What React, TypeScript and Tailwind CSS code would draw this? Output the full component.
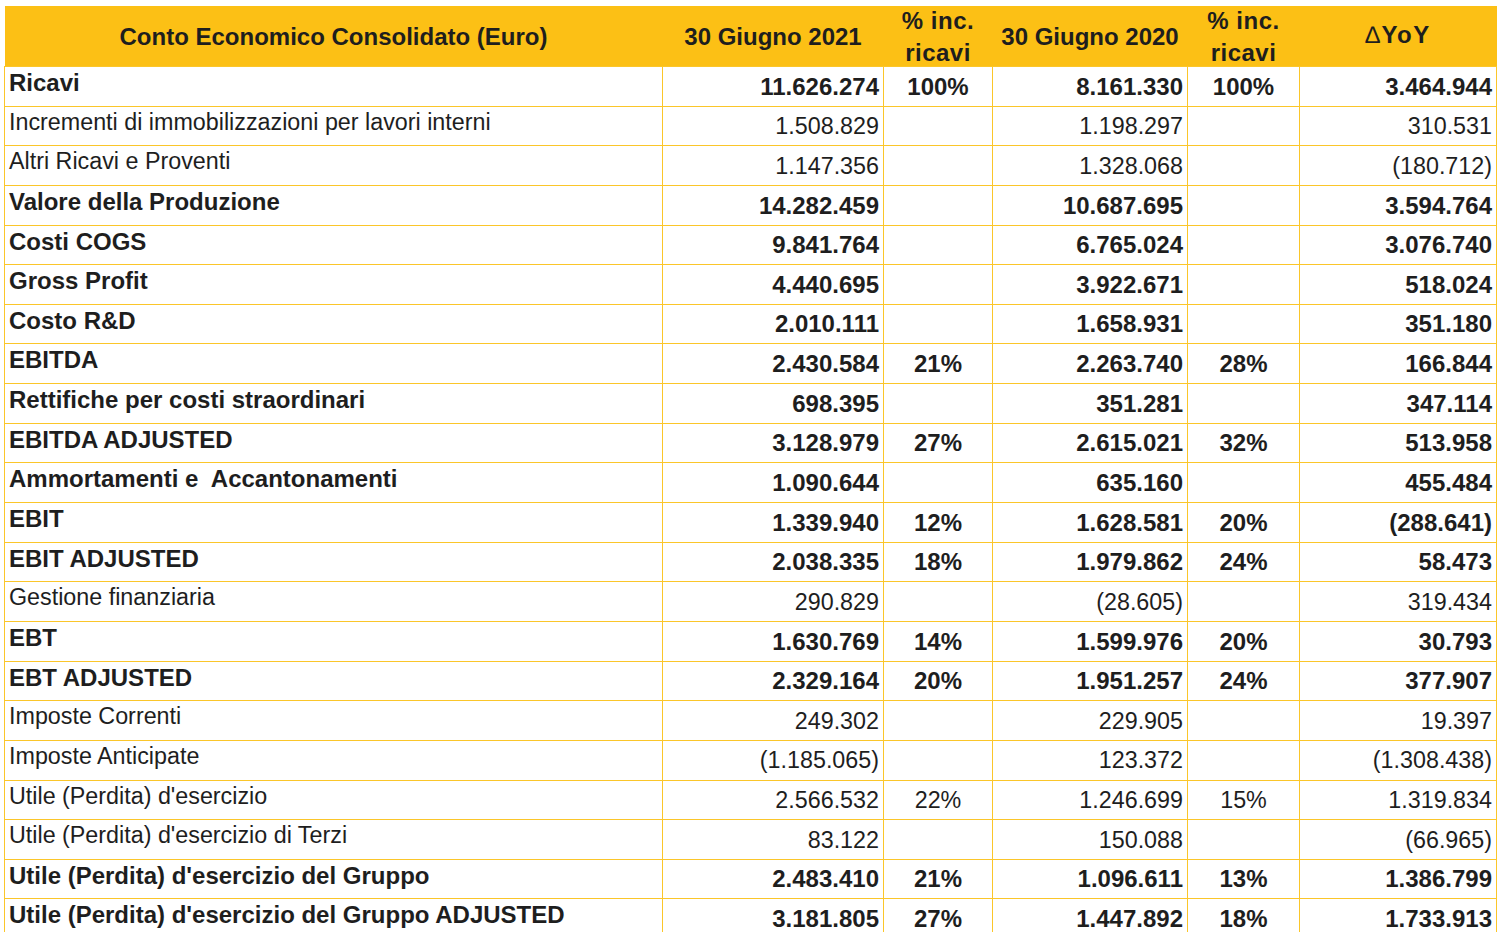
import React from 'react';

type Row = {
  label: string;
  bold?: boolean;
  v21: string;
  p21?: string;
  v20: string;
  p20?: string;
  yoy: string;
};

const rows: Row[] = [
  { label: 'Ricavi', bold: true, v21: '11.626.274', p21: '100%', v20: '8.161.330', p20: '100%', yoy: '3.464.944' },
  { label: 'Incrementi di immobilizzazioni per lavori interni', v21: '1.508.829', v20: '1.198.297', yoy: '310.531' },
  { label: 'Altri Ricavi e Proventi', v21: '1.147.356', v20: '1.328.068', yoy: '(180.712)' },
  { label: 'Valore della Produzione', bold: true, v21: '14.282.459', v20: '10.687.695', yoy: '3.594.764' },
  { label: 'Costi COGS', bold: true, v21: '9.841.764', v20: '6.765.024', yoy: '3.076.740' },
  { label: 'Gross Profit', bold: true, v21: '4.440.695', v20: '3.922.671', yoy: '518.024' },
  { label: 'Costo R&D', bold: true, v21: '2.010.111', v20: '1.658.931', yoy: '351.180' },
  { label: 'EBITDA', bold: true, v21: '2.430.584', p21: '21%', v20: '2.263.740', p20: '28%', yoy: '166.844' },
  { label: 'Rettifiche per costi straordinari', bold: true, v21: '698.395', v20: '351.281', yoy: '347.114' },
  { label: 'EBITDA ADJUSTED', bold: true, v21: '3.128.979', p21: '27%', v20: '2.615.021', p20: '32%', yoy: '513.958' },
  { label: 'Ammortamenti e\u00a0 Accantonamenti', bold: true, v21: '1.090.644', v20: '635.160', yoy: '455.484' },
  { label: 'EBIT', bold: true, v21: '1.339.940', p21: '12%', v20: '1.628.581', p20: '20%', yoy: '(288.641)' },
  { label: 'EBIT ADJUSTED', bold: true, v21: '2.038.335', p21: '18%', v20: '1.979.862', p20: '24%', yoy: '58.473' },
  { label: 'Gestione finanziaria', v21: '290.829', v20: '(28.605)', yoy: '319.434' },
  { label: 'EBT', bold: true, v21: '1.630.769', p21: '14%', v20: '1.599.976', p20: '20%', yoy: '30.793' },
  { label: 'EBT ADJUSTED', bold: true, v21: '2.329.164', p21: '20%', v20: '1.951.257', p20: '24%', yoy: '377.907' },
  { label: 'Imposte Correnti', v21: '249.302', v20: '229.905', yoy: '19.397' },
  { label: 'Imposte Anticipate', v21: '(1.185.065)', v20: '123.372', yoy: '(1.308.438)' },
  { label: "Utile (Perdita) d'esercizio", v21: '2.566.532', p21: '22%', v20: '1.246.699', p20: '15%', yoy: '1.319.834' },
  { label: "Utile (Perdita) d'esercizio di Terzi", v21: '83.122', v20: '150.088', yoy: '(66.965)' },
  { label: "Utile (Perdita) d'esercizio del Gruppo", bold: true, v21: '2.483.410', p21: '21%', v20: '1.096.611', p20: '13%', yoy: '1.386.799' },
  { label: "Utile (Perdita) d'esercizio del Gruppo ADJUSTED", bold: true, v21: '3.181.805', p21: '27%', v20: '1.447.892', p20: '18%', yoy: '1.733.913' },
];

const cell = 'border-[1.5px] border-[#FBC62A] p-0';

const PctHead = () => (
  <th className="p-0 pt-[2px] text-center align-top tracking-[0.5px]">
    <div className="leading-[26px]">% inc.</div>
    <div className="leading-[26px] mt-[6px]">ricavi</div>
  </th>
);

const App = () => {
  return (
    <div className="w-[1500px] h-[932px] overflow-hidden bg-white pt-[6px] pl-[4px] font-[family-name:'Liberation_Sans',Arial,sans-serif] text-[#1e1e1e]">
      <table className="table-fixed border-collapse w-[1492px] leading-none">
        <colgroup>
          <col className="w-[658px]" />
          <col className="w-[221px]" />
          <col className="w-[109px]" />
          <col className="w-[195px]" />
          <col className="w-[112px]" />
          <col className="w-[197px]" />
        </colgroup>
        <thead>
          {/* intestazione gialla */}
          <tr className="bg-[#FCC015] h-[60px] font-bold text-[24px]">
            <th className="p-0 text-center align-middle pt-[2px]">Conto Economico Consolidato (Euro)</th>
            <th className="p-0 text-center align-middle pt-[2px]">30 Giugno 2021</th>
            <PctHead />
            <th className="p-0 text-center align-middle pt-[2px]">30 Giugno 2020</th>
            <PctHead />
            <th className="p-0 text-center align-middle pb-[2px] tracking-[1.5px]">
              <span className="font-normal">∆</span>YoY
            </th>
          </tr>
        </thead>
        <tbody>
          {rows.map((r) => (
            <tr key={r.label} className={`h-[39.65px] ${r.bold ? 'font-bold text-[24px]' : 'text-[23.3px]'}`}>
              <td className={`${cell} align-top pt-[4px] pl-[4px] whitespace-nowrap`}>{r.label}</td>
              <td className={`${cell} align-bottom pb-[7px] pr-[4px] text-right`}>{r.v21}</td>
              <td className={`${cell} align-bottom pb-[7px] text-center`}>{r.p21}</td>
              <td className={`${cell} align-bottom pb-[7px] pr-[4px] text-right`}>{r.v20}</td>
              <td className={`${cell} align-bottom pb-[7px] text-center`}>{r.p20}</td>
              <td className={`${cell} align-bottom pb-[7px] pr-[4px] text-right`}>{r.yoy}</td>
            </tr>
          ))}
        </tbody>
      </table>
    </div>
  );
};

export default App;
